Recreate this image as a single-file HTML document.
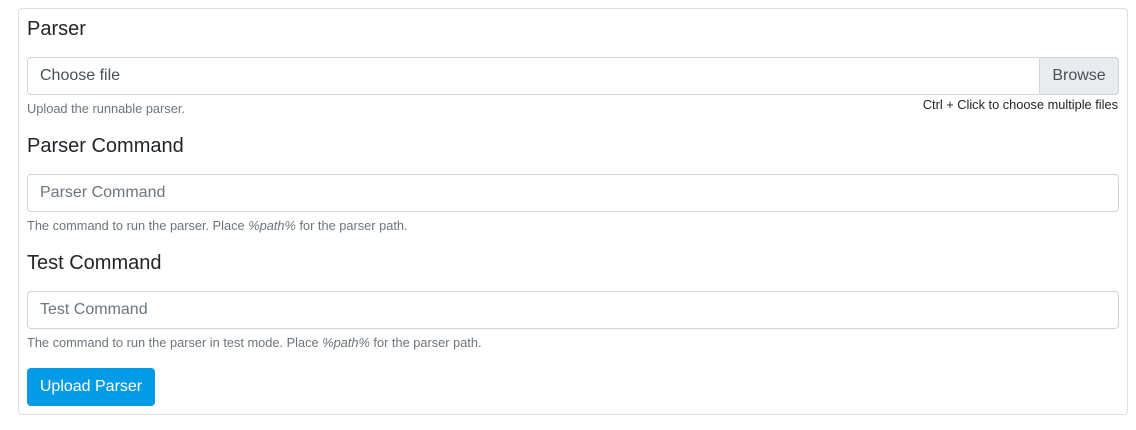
<!DOCTYPE html>
<html><head><meta charset="utf-8"><style>
*{box-sizing:border-box;margin:0;padding:0}
body{width:1136px;height:430px;background:#fff;font-family:"Liberation Sans",sans-serif;color:#212529;position:relative;overflow:hidden}
.card{position:absolute;left:18px;top:8px;width:1110px;height:407px;border:1px solid #dfdfdf;border-radius:4px}
.h{position:absolute;left:27px;font-size:20px;line-height:24px;color:#212529}
.in{position:absolute;left:27px;width:1092px;height:38px;border:1px solid #ced4da;border-radius:4px;font-size:16px;color:#6c757d;padding:0 12px;line-height:36px}
.help{position:absolute;left:27px;font-size:12.8px;color:#6c757d;line-height:16px}
.browse{position:absolute;left:1039px;top:57px;width:80px;height:38px;background:#e9ecef;border:1px solid #ced4da;border-radius:0 4px 4px 0;font-size:16px;color:#495057;line-height:36px;text-align:center}
.btn{position:absolute;left:27px;top:368px;width:128px;height:38px;background:#039be5;border-radius:4px;color:#fff;font-size:16px;line-height:38px;text-align:center}
</style></head><body>
<div class="card"></div>
<div class="h" style="top:17px">Parser</div>
<div class="in" style="top:57px;color:#495057">Choose file</div>
<div class="browse">Browse</div>
<div class="help" style="top:101px">Upload the runnable parser.</div>
<div style="position:absolute;right:18px;top:97px;font-size:12.8px;line-height:16px;color:#212529">Ctrl + Click to choose multiple files</div>
<div class="h" style="top:134px">Parser Command</div>
<div class="in" style="top:174px">Parser Command</div>
<div class="help" style="top:218px">The command to run the parser. Place <i>%path%</i> for the parser path.</div>
<div class="h" style="top:251px">Test Command</div>
<div class="in" style="top:291px">Test Command</div>
<div class="help" style="top:335px">The command to run the parser in test mode. Place <i>%path%</i> for the parser path.</div>
<div class="btn">Upload Parser</div>
</body></html>
